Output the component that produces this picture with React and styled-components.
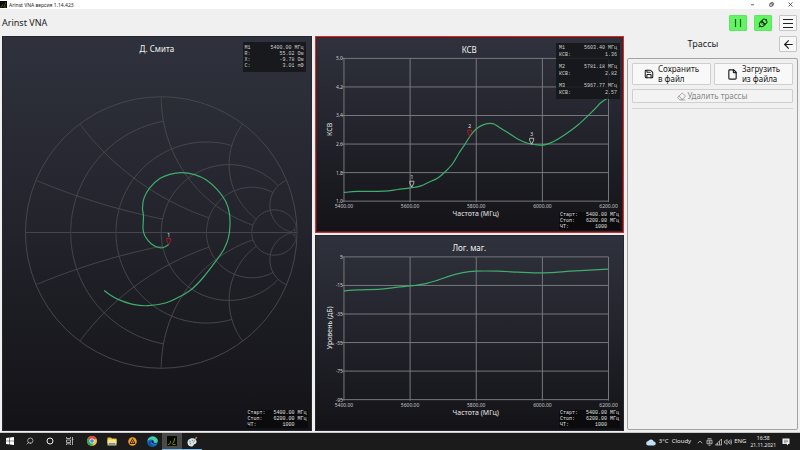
import React from 'react'
import styled, { createGlobalStyle, css } from 'styled-components'
import { ArrowLeft, Eraser, File, Save, Search, ChevronUp } from 'lucide-react'

const ui = '"Noto Sans", "Open Sans", sans-serif'
const mono = '"Liberation Mono", monospace'

const smithTrace = [
  [166, 190], [162, 192.500], [157, 193.3], [148.7, 189.500], [142.500, 182], [140.3, 175], [140.7, 161.7],
  [139.7, 153.3], [141.3, 143.3], [147, 133.3], [157, 124], [167, 119.7], [178.7, 118],
  [192, 120], [203.7, 125.5], [215.3, 135.7], [223, 146.7], [226.7, 158.3], [227.3, 171.7],
  [225.7, 183.7], [221.3, 194.7], [213.7, 206], [200.3, 223.3], [188.7, 235], [177, 242.3],
  [163.7, 248.3], [145.3, 251.3], [130.3, 250], [115.3, 245], [107, 240.3], [101.3, 236],
]

const swrTrace = [
  [28, 137.3], [42, 136.3], [68, 136], [82, 134.3], [95, 132.7], [105, 130.7], [113, 127],
  [122, 122.7], [130, 116], [137, 108.3], [143, 98.3], [149, 89.3], [155, 80], [161, 73.3],
  [168, 69.3], [177, 68.3], [183, 71.7], [192, 77.3], [202, 83.7], [212, 88], [222, 89.7],
  [230, 89.3], [238, 86.3], [248, 80.3], [262, 70], [278, 55], [285, 47.7], [293, 42.3],
]

const logTrace = [
  [28, 37], [42, 36], [65, 35.3], [82, 33.3], [95, 32], [110, 29.7], [122, 26.3],
  [135, 21.7], [147, 18.7], [160, 17.3], [182, 17.3], [202, 18.3], [218, 19],
  [235, 18.7], [255, 17.3], [278, 16], [293, 15.3],
]

// smooth line through all the points
function curve(points) {
  let d = `M${points[0][0]},${points[0][1]}`
  for (let i = 0; i < points.length - 1; i++) {
    const a = points[i - 1] || points[i]
    const b = points[i]
    const c = points[i + 1]
    const e = points[i + 2] || c
    d += `C${b[0] + (c[0] - a[0]) / 6},${b[1] + (c[1] - a[1]) / 6} ${c[0] - (e[0] - b[0]) / 6},${c[1] - (e[1] - b[1]) / 6} ${c[0]},${c[1]}`
  }
  return d
}

// impedance r + jx -> reflection coefficient, in chart coordinates
const CX = 158.5
const CY = 178
const R = 136

function gamma(r, x) {
  const den = (r + 1) * (r + 1) + x * x
  return [CX + (R * (r * r - 1 + x * x)) / den, CY - (R * 2 * x) / den]
}

function line(fn, max) {
  const points = []
  for (let i = 0; i <= 80; i++) {
    const t = i / 80
    points.push(fn(max * t * t).map((v) => v.toFixed(2)).join(','))
  }
  return 'M' + points.join('L')
}

// [value, where the line stops]
const steps = [[0.2, 1], [0.5, 2], [1, 5], [2, 5], [5, 50], [50, 300]]

function SmithGrid() {
  return (
    <g fill="none" stroke="#47474a" strokeWidth="1">
      <circle cx={CX} cy={CY} r={R} />
      <path d={`M${CX - R},${CY}H${CX + R}`} />
      {[1, -1].map((s) => (
        <g key={s}>
          {steps.map(([v, max]) => (
            <g key={v}>
              <path d={line((x) => gamma(v, s * x), max)} />
              <path d={line((r) => gamma(r, s * v), max)} />
            </g>
          ))}
        </g>
      ))}
    </g>
  )
}

function Marker({ x, y, n, color = '#d8d8d8' }) {
  return (
    <g>
      <text x={x} y={y - 8} fontSize="5" fill="#e8e8e8" textAnchor="middle">{n}</text>
      <path d={`M${x - 2},${y - 6}h4v2l-2,4l-2,-4z`} fill="none" stroke={color} strokeWidth="0.8" />
    </g>
  )
}

function Plot({ ticks, yLabel, trace, label, children }) {
  const freqs = ['5400.00', '5600.00', '5800.00', '6000.00', '6200.00']
  const step = 143 / (ticks.length - 1)
  return (
    <Chart viewBox="0 0 308 176" role="img" aria-label={label}>
      <g stroke="#77787c" strokeWidth="1" fill="none">
        {freqs.map((f, i) => <path key={f} d={`M${28 + i * 66.25},3V147`} />)}
        {ticks.map((t, i) => <path key={t} d={`M26,${3 + i * step}H293`} />)}
      </g>
      <g fontSize="5" fill="#c9c9cc">
        {ticks.map((t, i) => <text key={t} x="27" y={5 + i * step} textAnchor="end">{t}</text>)}
        {freqs.map((f, i) => <text key={f} x={28 + i * 66.25} y="153" textAnchor="middle">{f}</text>)}
      </g>
      <g fontSize="7" fill="#e6e6e6" textAnchor="middle">
        <text x="160" y="161">Частота (МГц)</text>
        <text transform="translate(16 74) rotate(-90)">{yLabel}</text>
      </g>
      <path d={curve(trace)} fill="none" stroke="#3fae6c" strokeWidth="1.2" />
      {children}
    </Chart>
  )
}

function Sweep() {
  return (
    <SweepInfo>
      <dt>Старт:</dt><dd>5400.00</dd><dd>МГц</dd>
      <dt>Стоп:</dt><dd>6200.00</dd><dd>МГц</dd>
      <dt>ЧТ:</dt><dd>1000</dd><dd />
    </SweepInfo>
  )
}

const swrMarkers = [
  ['M1', '5603.40 МГц', '1.36'],
  ['M2', '5781.18 МГц', '2.82'],
  ['M3', '5967.77 МГц', '2.57'],
]

function App() {
  return (
    <Page>
      <GlobalStyle />
      <TitleBar>
        <AppIcon viewBox="0 0 14 14" $size={7}><Logo /></AppIcon>
        <span>Arinst VNA версия 1.14.423</span>
        <WindowButtons>
          <WindowButton aria-label="Свернуть"><svg viewBox="0 0 10 10"><path d="M2,5.500H8" /></svg></WindowButton>
          <WindowButton aria-label="Восстановить"><svg viewBox="0 0 10 10"><path d="M1.500,3.500h5v5h-5zM3.500,3V1.500h5v5H7" /></svg></WindowButton>
          <WindowButton aria-label="Закрыть"><svg viewBox="0 0 10 10"><path d="M1,1L9,9M9,1L1,9" /></svg></WindowButton>
        </WindowButtons>
      </TitleBar>

      <Header>
        <h1>Arinst VNA</h1>
        <ToolButton $on aria-label="Пауза">
          <svg width="10" height="10" viewBox="0 0 10 10" fill="none" stroke="#20562a" strokeWidth="1.2">
            <path d="M2.500,1V9M7.500,1V9" />
          </svg>
        </ToolButton>
        <ToolButton $on aria-label="Подключение">
          <svg width="10" height="10" viewBox="0 0 20 20" fill="none" stroke="#103318" strokeWidth="2">
            <g transform="rotate(45 10 10)">
              <rect x="5" y="2" width="10" height="7" rx="3" />
              <path d="M5,9v4a5,5 0 0 0 10,0V9zM8,9v4M12,9v4M10,18v4M10,2v-3" />
            </g>
          </svg>
        </ToolButton>
        <ToolButton aria-label="Меню">
          <svg width="12" height="12" viewBox="0 0 12 12" fill="none" stroke="#222" strokeWidth="1">
            <path d="M1,2.500H11M1,6.500H11M1,10.500H11" />
          </svg>
        </ToolButton>
      </Header>

      <Main>
        <Panel>
          <h2>Д. Смита</h2>
          <Chart viewBox="0 0 308 375" role="img" aria-label="Диаграмма Смита">
            <SmithGrid />
            <path d={curve(smithTrace)} fill="none" stroke="#3fae6c" strokeWidth="1.2" />
            <Marker x={166} y={190} n="1" color="#c22020" />
          </Chart>
          <Readout>
            <dt>M1</dt><dd>5400.00 МГц</dd>
            <dt>R:</dt><dd>55.02 Ом</dd>
            <dt>X:</dt><dd>-9.78 Ом</dd>
            <dt>C:</dt><dd>3.01 пФ</dd>
          </Readout>
          <Sweep />
        </Panel>

        <Column>
          <Panel $active>
            <h2>КСВ</h2>
            <Plot label="КСВ" yLabel="КСВ" ticks={['5.0', '4.2', '3.4', '2.6', '1.8', '1.0']} trace={swrTrace}>
              <Marker x={96} y={132} n="1" />
              <Marker x={154} y={81} n="2" color="#c22020" />
              <Marker x={216} y={89} n="3" />
            </Plot>
            <MarkerList>
              {swrMarkers.map(([name, freq, value]) => (
                <dl key={name}>
                  <dt>{name}</dt><dd>{freq}</dd>
                  <dt>КСВ:</dt><dd>{value}</dd>
                </dl>
              ))}
            </MarkerList>
            <Sweep />
          </Panel>
          <Panel>
            <h2>Лог. маг.</h2>
            <Plot label="Логарифмическая магнитуда" yLabel="Уровень (дБ)" ticks={['5', '-15', '-35', '-55', '-75', '-95']} trace={logTrace} />
            <Sweep />
          </Panel>
        </Column>

        <Sidebar>
          <SidebarHead>
            <h2>Трассы</h2>
            <ToolButton aria-label="Назад"><ArrowLeft size={13} strokeWidth={2} /></ToolButton>
          </SidebarHead>
          <Frame>
            <ButtonRow>
              <ActionButton><Save size={10} strokeWidth={2.5} /><span>Сохранить<br />в файл</span></ActionButton>
              <ActionButton><File size={11} strokeWidth={2.5} /><span>Загрузить<br />из файла</span></ActionButton>
            </ButtonRow>
            <ActionButton $slim disabled><Eraser size={9} /><span>Удалить трассы</span></ActionButton>
            <Divider />
          </Frame>
        </Sidebar>
      </Main>

      <Taskbar>
        <TaskGroup>
          <TaskButton aria-label="Пуск">
            <svg width="8" height="8" viewBox="0 0 8 8" fill="#fff"><path d="M0,1l3.500,-.5v3.200H0zM4,.4L8,0v3.700H4zM0,4.200h3.500v3.200L0,7zM4,4.200h4V8L4,7.500z" /></svg>
          </TaskButton>
          <TaskButton aria-label="Поиск">
            <FlippedSearch size={8} />
          </TaskButton>
          <TaskButton aria-label="Кортана">
            <svg width="8" height="8" viewBox="0 0 8 8"><circle cx="4" cy="4" r="3" fill="none" stroke="#eee" /></svg>
          </TaskButton>
          <TaskButton aria-label="Представление задач">
            <svg width="8" height="8" viewBox="0 0 8 8" fill="none" stroke="#ccc" strokeWidth=".8"><path d="M.5,0v1.500h4V0M.5,3h4v2.500h-4zM.5,8V6.800h4V8M6.500,0v8M5.800,2.500h1.600" /></svg>
          </TaskButton>
        </TaskGroup>
        <TaskGroup>
          <TaskButton aria-label="Chrome">
            <svg width="10" height="10" viewBox="0 0 20 20">
              <circle cx="10" cy="10" r="10" fill="#f6c72f" />
              <path d="M10,10L1.300,5A10,10 0 0 1 18.700,5z" fill="#e2463a" />
              <path d="M10,10L1.300,5A10,10 0 0 0 10,20L14,12z" fill="#37a553" />
              <circle cx="10" cy="10" r="4.500" fill="#4385ee" stroke="#fff" strokeWidth="1.500" />
            </svg>
          </TaskButton>
          <TaskButton aria-label="Проводник">
            <svg width="10" height="9" viewBox="0 0 20 18">
              <path d="M1,1h7l2,2h9v14H1z" fill="#e9b83f" /><path d="M1,5h18v8H1z" fill="#fbe28c" /><path d="M4,12h12v5h-3v-2H7v2H4z" fill="#4e9fd8" />
            </svg>
          </TaskButton>
          <TaskButton aria-label="AIMP">
            <svg width="9" height="9" viewBox="0 0 18 18">
              <circle cx="9" cy="9" r="8.500" fill="#f2a31d" /><path d="M9,3.500L14,13H4z" fill="none" stroke="#3a2606" strokeWidth="2" strokeLinejoin="round" /><circle cx="9" cy="10" r="1.500" fill="#3a2606" />
            </svg>
          </TaskButton>
          <TaskButton aria-label="Edge">
            <svg width="11" height="11" viewBox="0 0 22 22">
              <circle cx="11" cy="11" r="10.500" fill="#1775cf" />
              <path d="M1,10C2,-2 21,-2 21.500,10C21,14 15,14.500 13,12.500C15,9 11,6 7,7C4,7.500 2,8.500 1,10z" fill="#45cfa4" />
              <path d="M8,10c-3,5 2,11 9,8c-3,4 -12,4 -14,-3c-1,-4 2,-6 5,-5z" fill="#0c4f9f" />
              <path d="M13,12.500C14,9 11,8 9,9.500C8,13 13,17 20,14C16,14.500 14,14 13,12.500z" fill="#101820" />
            </svg>
          </TaskButton>
          <TaskButton $running $active aria-label="Arinst VNA">
            <AppIcon viewBox="0 0 14 14" $size={10}><Logo /></AppIcon>
          </TaskButton>
          <TaskButton $running aria-label="Paint">
            <svg width="11" height="11" viewBox="0 0 22 22">
              <path d="M1,13C1,6 9,3 14,5c7,2 6,11 2,11c-3,0 -2,2 -4,4c-4,3 -11,0 -11,-7z" fill="#dbe4e9" />
              <circle cx="6" cy="11" r="1.500" fill="#4a90c8" /><circle cx="11" cy="9" r="1.500" fill="#62ac5b" /><circle cx="7" cy="15" r="1.500" fill="#8a8f94" />
              <path d="M12,14L18,5" stroke="#9aa7b0" strokeWidth="2" /><path d="M16,6l2,-5l3,3z" fill="#d6844c" />
            </svg>
          </TaskButton>
        </TaskGroup>
        <Tray>
          <svg width="10" height="8" viewBox="0 0 20 16"><path d="M5,15a4.500,4.500 0 0 1 -.5,-9a6,6 0 0 1 11,1a4,4 0 0 1 0,8z" fill="#bfe0f5" /></svg>
          <Weather>3°C&nbsp; Cloudy</Weather>
          <ChevronUp size={8} />
          <svg width="7" height="8" viewBox="0 0 14 16" fill="none" stroke="#ddd" strokeWidth="1.500"><path d="M3,1.500h8M2,4.500h10v7H2zM5,14.500h4" /><circle cx="7" cy="8" r="1.500" /></svg>
          <svg width="7" height="8" viewBox="0 0 14 16" fill="none" stroke="#ccc" strokeWidth="1.500"><path d="M1,14L13,2v12zM5,14v-4M9,14V6" /></svg>
          <svg width="8" height="8" viewBox="0 0 16 16" fill="none" stroke="#ddd" strokeWidth="1.300"><path d="M1,6h2l3,-3v10l-3,-3H1zM8.500,5.500q2,2.500 0,5M11,4q3,4 0,8M13.500,2.500q4,5.500 0,11" /></svg>
          <span>ENG</span>
          <Clock>16:58<br />21.11.2021</Clock>
          <svg width="8" height="8" viewBox="0 0 16 16"><path d="M1,1h14v11h-3v3l-3,-3H1z" fill="#eee" /><path d="M4,4.500h8M4,7h8M4,9.500h5" stroke="#555" /></svg>
        </Tray>
      </Taskbar>
    </Page>
  )
}

function Logo() {
  return (
    <>
      <path d="M0,0h14v14H0z" fill="#080b04" />
      <path d="M1,12C4,12 5,10 5,7M7,11q3,-1 4,-8M8,12h4" fill="none" stroke="#8b9a1e" strokeWidth="1.2" />
    </>
  )
}

const GlobalStyle = createGlobalStyle`
  * { box-sizing: border-box; }
  body { margin: 0; background: #f0f0f0; }
  h1, h2, dl, dd { margin: 0; font-weight: 400; }
  button { padding: 0; font: inherit; color: inherit; }
  svg { display: block; flex: none; }
`

const Page = styled.div`
  display: flex;
  flex-direction: column;
  min-height: 100vh;
  background: #f0f0f0;
  color: #1c1c1c;
  font-family: ${ui};
`

const TitleBar = styled.div`
  display: flex;
  align-items: center;
  gap: 2px;
  height: 9px;
  background: #fff;
  font-size: 5px;
  line-height: 8px;
`

const AppIcon = styled.svg`
  width: ${(p) => p.$size}px;
  height: ${(p) => p.$size}px;
`

const WindowButtons = styled.div`
  display: flex;
  margin-left: auto;
`

const WindowButton = styled.button`
  display: grid;
  place-items: center;
  width: 19px;
  height: 8px;
  border: 0;
  background: none;

  svg {
    width: 5px;
    height: 5px;
    fill: none;
    stroke: #333;
    stroke-width: 1.5;
  }
`

const Header = styled.header`
  display: flex;
  align-items: center;
  gap: 7px;
  height: 27px;
  padding: 0 3px 0 2px;

  h1 {
    flex: 1;
    font-size: 9px;
    line-height: 12px;
  }
`

const ToolButton = styled.button`
  display: grid;
  place-items: center;
  width: 18px;
  height: 16px;
  border: 1px solid ${(p) => (p.$on ? '#62e562' : '#c6c6c6')};
  border-radius: 1px;
  background: ${(p) => (p.$on ? '#62f562' : '#f8f8f8')};
`

const Main = styled.main`
  flex: 1;
  display: grid;
  grid-template-columns: 1fr 1fr 171px;
  gap: 3px;
  padding: 0 2px 1px;
`

const Column = styled.div`
  display: grid;
  grid-template-rows: 1fr 1fr;
  gap: 2px;
`

const Panel = styled.section`
  position: relative;
  display: flex;
  flex-direction: column;
  min-width: 0;
  border: 1px solid #25262e;
  background: linear-gradient(#2f313c, #22232b 50%, #131317);
  color: #f2f2f2;

  ${(p) => p.$active && css`
    padding-top: 1px;
    border-color: #c9302f;
    box-shadow: inset 0 0 0 1px #571b20;
  `}

  h2 {
    padding-top: 7px;
    font-size: 8px;
    line-height: 10px;
    text-align: center;
  }
`

const Chart = styled.svg`
  flex: 1 1 0;
  width: 100%;
  min-height: 0;
  font-family: ${ui};
`

const infoBox = css`
  position: absolute;
  right: 5px;
  font-family: ${mono};
  font-size: 5px;
  line-height: 6px;
  white-space: pre;
`

const Readout = styled.dl`
  ${infoBox}
  top: 5px;
  display: grid;
  grid-template-columns: auto auto;
  justify-content: space-between;
  width: 63px;
  padding: 3px 2px;
  background: #18191d;
  color: #d0d0d0;

  dd {
    text-align: right;
  }
`

const MarkerList = styled.div`
  ${infoBox}
  top: 6px;
  right: 3px;
  display: grid;
  gap: 5px;
  width: 64px;
  padding: 2px 3px;
  background: rgba(20, 21, 25, 0.85);
  color: #d0d0d0;
  line-height: 7px;

  dl {
    display: grid;
    grid-template-columns: auto auto;
    justify-content: space-between;
  }

  dd {
    text-align: right;
  }
`

const SweepInfo = styled.dl`
  ${infoBox}
  right: 3px;
  bottom: 2px;
  display: grid;
  grid-template-columns: 1fr auto auto;
  column-gap: 3px;
  width: 61px;
  padding: 0 1px;
  background: #0b0b0d;
  color: #e0e0e0;

  dd {
    text-align: right;
  }
`

const Sidebar = styled.aside`
  display: flex;
  flex-direction: column;
  padding-bottom: 1px;
`

const SidebarHead = styled.div`
  display: flex;
  align-items: center;
  height: 22px;
  padding: 0 1px 6px 0;

  h2 {
    flex: 1;
    font-size: 9px;
    line-height: 12px;
    text-align: center;
  }
`

const Frame = styled.div`
  flex: 1;
  display: flex;
  flex-direction: column;
  gap: 4px;
  padding: 4px;
  border: 1px solid #a3a3a3;
  border-radius: 2px;
`

const ButtonRow = styled.div`
  display: grid;
  grid-template-columns: 1fr 1fr;
  gap: 3px;
`

const ActionButton = styled.button`
  display: flex;
  align-items: center;
  justify-content: center;
  gap: ${(p) => (p.$slim ? 1 : 4)}px;
  height: ${(p) => (p.$slim ? 14 : 22)}px;
  border: 1px solid #cfcfcf;
  border-radius: 1px;
  background: ${(p) => (p.$slim ? '#f3f3f3' : '#f8f8f8')};
  color: ${(p) => (p.disabled ? '#8a8a8a' : '#1c1c1c')};
  font-size: 8px;
  line-height: 10px;
  text-align: left;
`

const Divider = styled.hr`
  width: 100%;
  margin: 1px 0;
  border: 0;
  border-top: 1px solid #d4d4d4;
`

const Taskbar = styled.footer`
  display: flex;
  gap: 2px;
  height: 18px;
  border-top: 1px solid #c9c9c9;
  background: #1b1b1b;
  color: #e6e6e6;
  font-size: 6px;
  line-height: 7px;
`

const TaskGroup = styled.div`
  display: flex;
`

const TaskButton = styled.button`
  display: grid;
  place-items: center;
  width: 20px;
  border: 0;
  border-bottom: 1px solid ${(p) => (p.$running ? '#76b9ed' : 'transparent')};
  background: ${(p) => (p.$active ? '#4a4a4a' : 'none')};
`

const FlippedSearch = styled(Search)`
  transform: rotate(90deg);
`

const Tray = styled.div`
  display: flex;
  align-items: center;
  gap: 2px;
  margin-left: auto;
  padding-right: 10px;
`

const Weather = styled.span`
  padding: 0 3px 0 1px;
`

const Clock = styled.time`
  padding: 0 4px 0 2px;
  font-size: 5px;
  text-align: center;
`

export default App
